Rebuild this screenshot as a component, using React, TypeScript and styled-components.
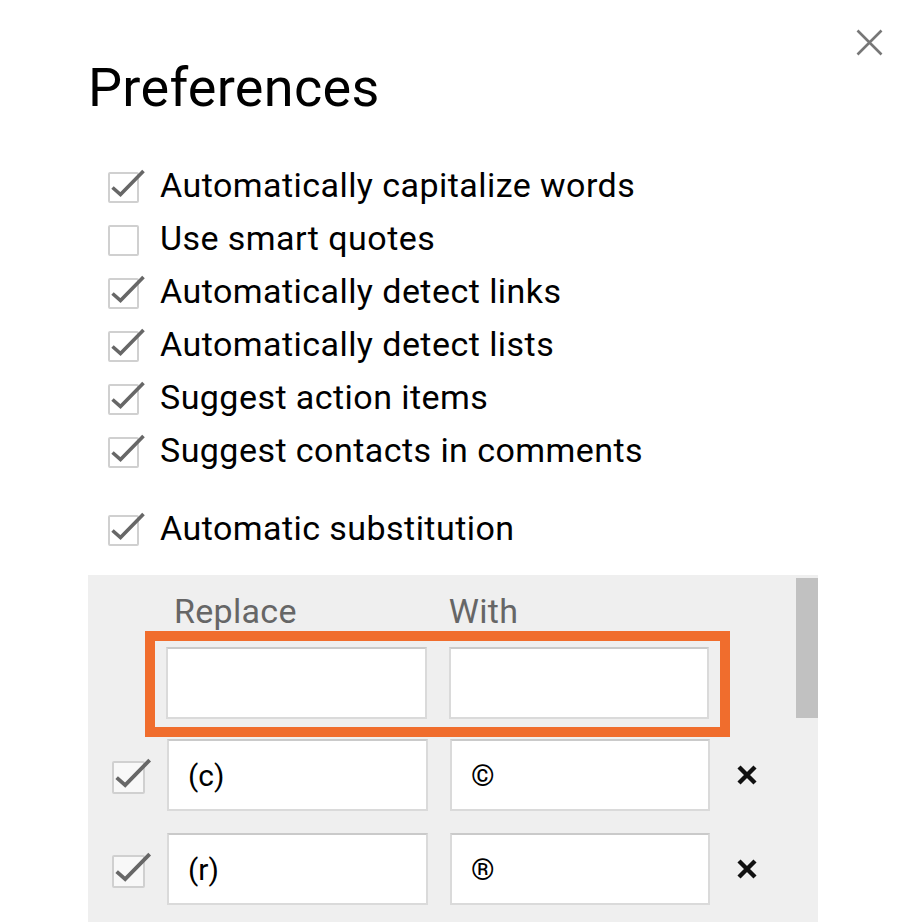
import React from "react";
import styled, { createGlobalStyle } from "styled-components";

const Global = createGlobalStyle`
  html, body { margin: 0; padding: 0; background: #ffffff; }
  body { font-family: Roboto, "Noto Sans", Arial, sans-serif; color: #000; overflow: hidden; }
  * { box-sizing: border-box; }
`;

const Page = styled.div`
  width: 918px;
  height: 922px;
  overflow: hidden;
  padding: 29px 35px 0 88px;
`;

const Header = styled.header`
  display: flex;
  justify-content: space-between;
  align-items: flex-start;
`;

const Title = styled.h1`
  margin: 32px 0 0 0;
  font-size: 54px;
  line-height: 54px;
  font-weight: 400;
  letter-spacing: 0.3px;
  color: #000;
`;

const CloseButton = styled.button`
  border: 0;
  background: transparent;
  padding: 0;
  width: 27px;
  height: 27px;
  display: flex;
  cursor: pointer;
`;

const OptionList = styled.div`
  margin-top: 43px;
  padding-left: 20px;
  display: flex;
  flex-direction: column;
`;

const OptionRow = styled.label<{ $gap?: number }>`
  display: flex;
  align-items: center;
  height: 53px;
  gap: 21px;
  font-size: 34px;
  letter-spacing: 0.45px;
  margin-top: ${(p) => p.$gap ?? 0}px;
`;

const Box = styled.span<{ $size: number; $bg?: string }>`
  position: relative;
  flex: none;
  width: ${(p) => p.$size}px;
  height: ${(p) => p.$size}px;
  border: 2px solid #d0d0d0;
  border-radius: 2px;
  background: ${(p) => p.$bg ?? "#ffffff"};
  margin-top: 5px;
`;

const CheckMark = styled.svg`
  position: absolute;
  left: 0;
  top: -4px;
  overflow: visible;
`;

const Panel = styled.section`
  margin-top: 21px;
  width: 730px;
  height: 360px;
  background: #efefef;
  display: flex;
`;

const PanelBody = styled.div`
  flex: 1;
  padding-top: 18px;
`;

const ColumnHeads = styled.div`
  display: flex;
  height: 38px;
  font-size: 34px;
  line-height: 37px;
  letter-spacing: 0.3px;
  color: #666666;
`;

const HeadCell = styled.span<{ $left: number }>`
  padding-left: ${(p) => p.$left}px;
`;

const NewEntry = styled.div`
  margin-left: 57px;
  width: 585px;
  border: 10px solid #f06d2d;
  padding: 6px 11px 8px 11px;
  display: flex;
  gap: 22px;
`;

const EntryList = styled.div`
  margin-top: 2px;
  padding-left: 24px;
  display: flex;
  flex-direction: column;
  gap: 22px;
`;

const EntryRow = styled.div`
  display: flex;
  align-items: center;
  gap: 22px;
`;

const TextInput = styled.input<{ $w: number }>`
  width: ${(p) => p.$w}px;
  height: 72px;
  border: 2px solid #dadada;
  border-top-color: #cacaca;
  background: #ffffff;
  padding: 0 0 0 19px;
  font-family: Roboto, "Noto Sans", Arial, sans-serif;
  font-size: 30px;
  color: #000;
  outline: none;
`;

const DeleteButton = styled.button`
  border: 0;
  background: transparent;
  padding: 0;
  margin-left: 4px;
  width: 22px;
  height: 22px;
  display: flex;
  cursor: pointer;
`;

const ScrollTrack = styled.div`
  width: 22px;
  padding-top: 3px;
`;

const ScrollThumb = styled.div`
  height: 140px;
  background: #c1c1c1;
`;

const Check = ({ size, checked, bg }: { size: number; checked: boolean; bg?: string }) => (
  <Box $size={size} $bg={bg}>
    {checked && (
      <CheckMark width={size} height={size} viewBox="0 0 31 31">
        <path
          d="M2.5 17.5 L10.5 24.5 L33.5 1"
          fill="none"
          stroke="#676767"
          strokeWidth="3.6"
          strokeLinejoin="miter"
        />
      </CheckMark>
    )}
  </Box>
);

const options = [
  { label: "Automatically capitalize words", checked: true },
  { label: "Use smart quotes", checked: false },
  { label: "Automatically detect links", checked: true },
  { label: "Automatically detect lists", checked: true },
  { label: "Suggest action items", checked: true },
  { label: "Suggest contacts in comments", checked: true },
];

const entries = [
  { from: "(c)", to: "©" },
  { from: "(r)", to: "®" },
];

export default function App() {
  return (
    <>
      <Global />
      <Page>
        <Header>
          <Title>Preferences</Title>
          <CloseButton aria-label="Close">
            <svg width="27" height="27" viewBox="0 0 27 27">
              <path d="M1.5 1.5 L25.5 25.5 M25.5 1.5 L1.5 25.5" stroke="#777777" strokeWidth="2.6" fill="none" />
            </svg>
          </CloseButton>
        </Header>
        <OptionList>
          {options.map((o) => (
            <OptionRow key={o.label}>
              <Check size={31} checked={o.checked} />
              <span>{o.label}</span>
            </OptionRow>
          ))}
          <OptionRow $gap={25}>
            <Check size={31} checked />
            <span>Automatic substitution</span>
          </OptionRow>
        </OptionList>
        <Panel>
          <PanelBody>
            <ColumnHeads>
              <HeadCell $left={86}>Replace</HeadCell>
              <HeadCell $left={152}>With</HeadCell>
            </ColumnHeads>
            <NewEntry>
              <TextInput $w={261} aria-label="Replace" />
              <TextInput $w={260} aria-label="With" />
            </NewEntry>
            <EntryList>
              {entries.map((e) => (
                <EntryRow key={e.from}>
                  <Check size={33} checked bg="#f8f8f8" />
                  <TextInput $w={261} defaultValue={e.from} />
                  <TextInput $w={260} defaultValue={e.to} />
                  <DeleteButton aria-label="Delete">
                    <svg width="22" height="22" viewBox="0 0 22 22">
                      <path d="M3 3 L19 19 M19 3 L3 19" stroke="#111" strokeWidth="4.4" fill="none" />
                    </svg>
                  </DeleteButton>
                </EntryRow>
              ))}
            </EntryList>
          </PanelBody>
          <ScrollTrack>
            <ScrollThumb />
          </ScrollTrack>
        </Panel>
      </Page>
    </>
  );
}
